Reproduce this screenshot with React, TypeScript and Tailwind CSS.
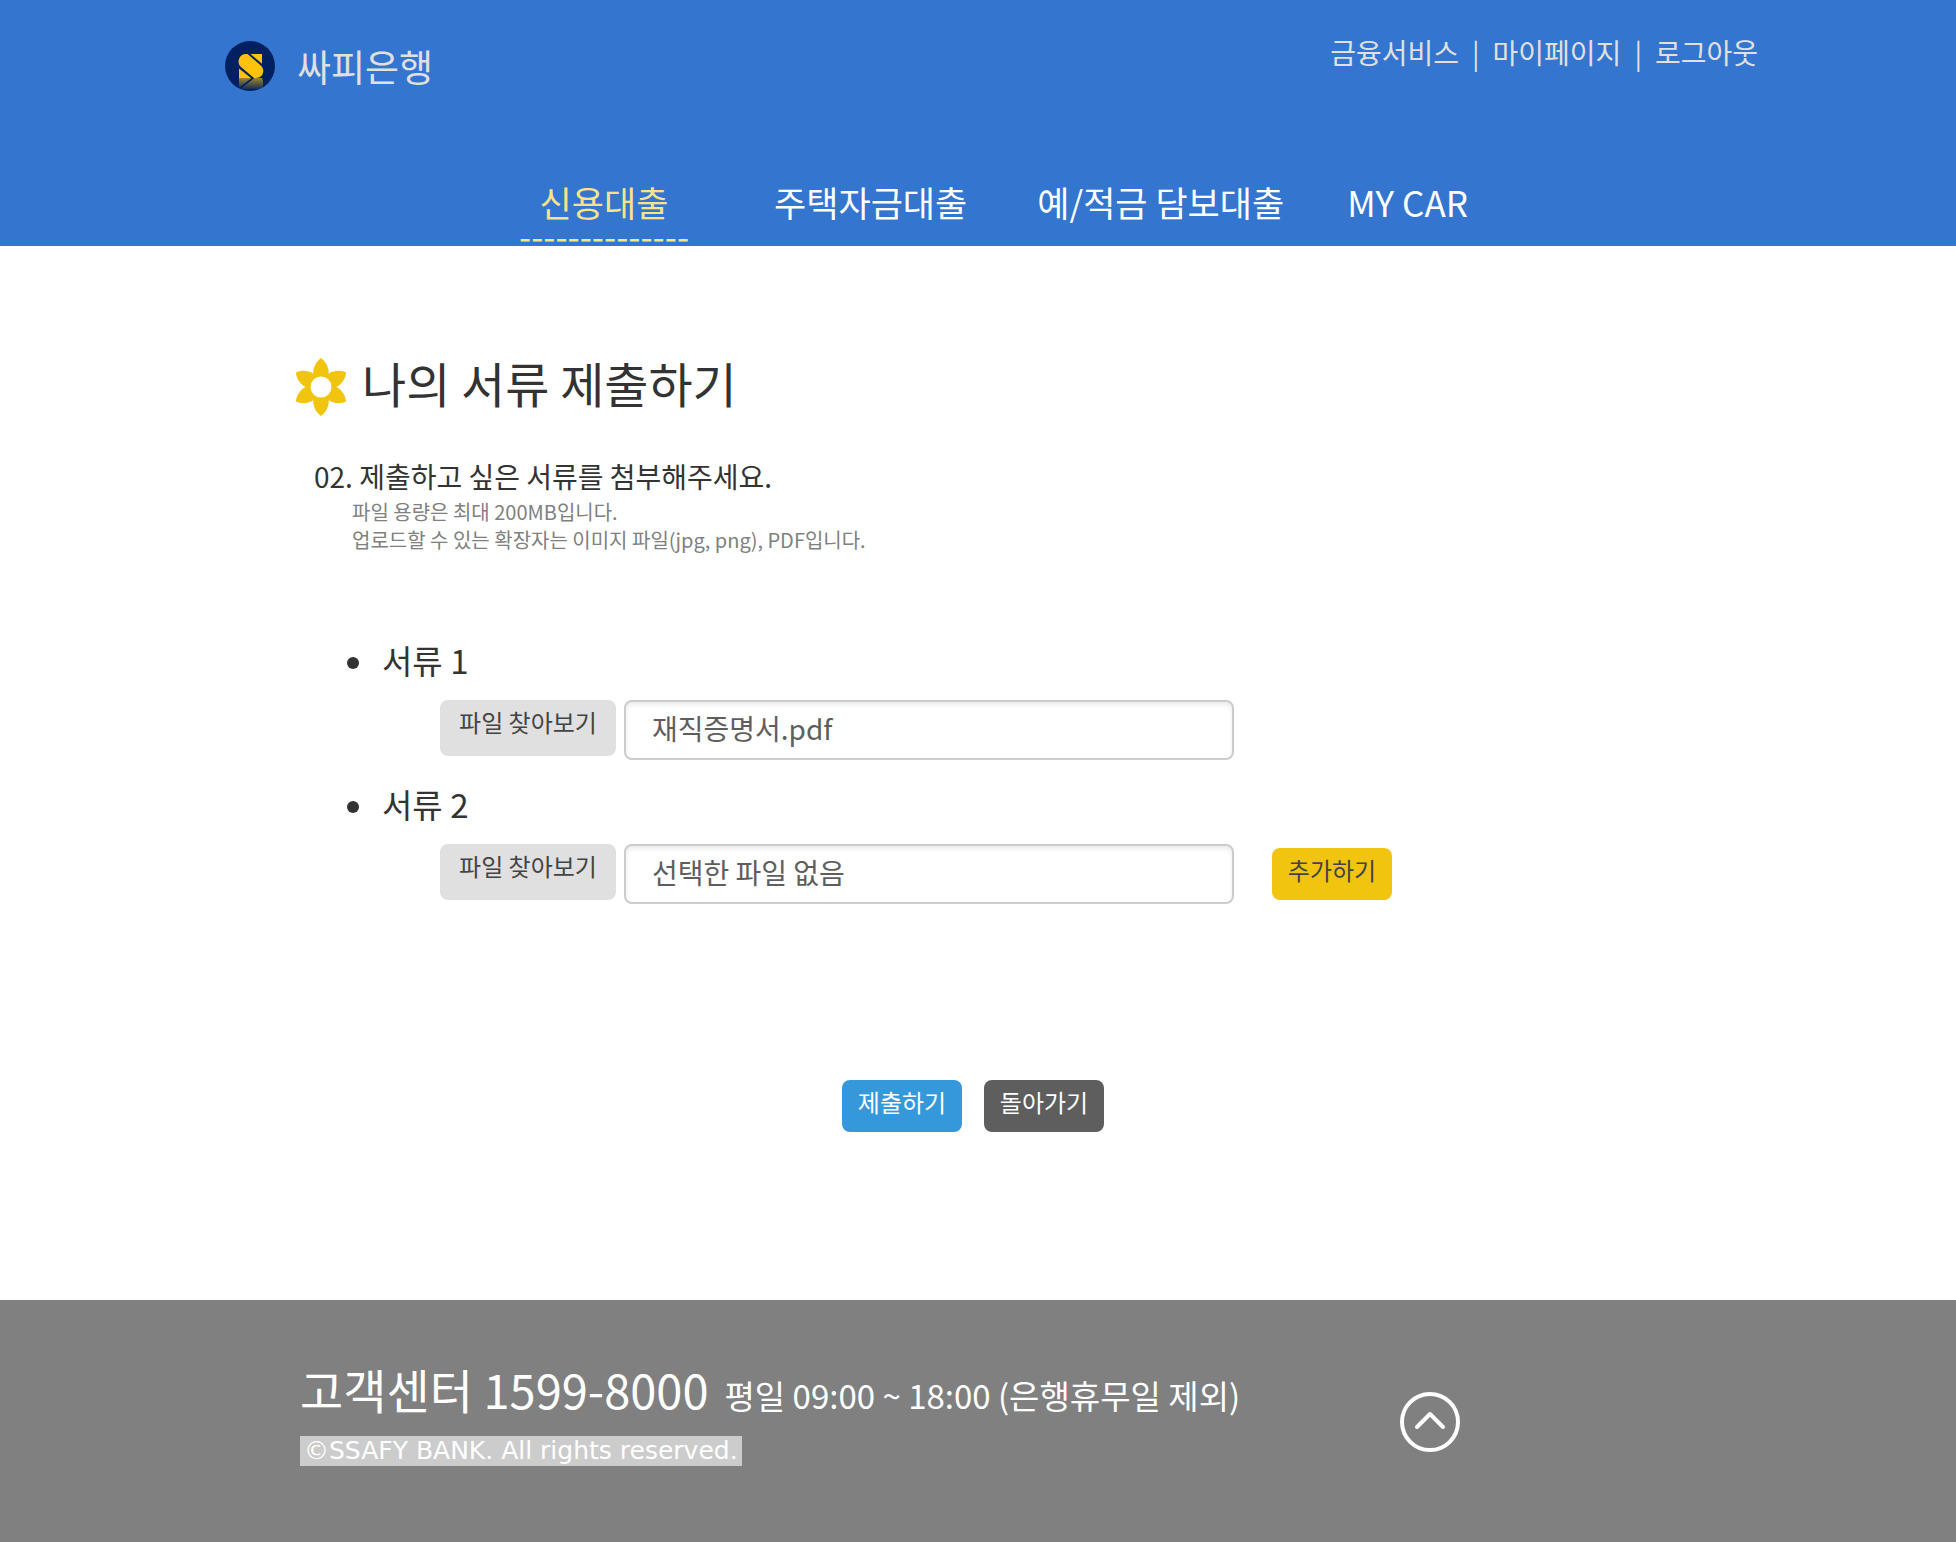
import { useState } from "react";

function BankLogo() {
  return (
    <svg viewBox="0 0 50 50" className="size-[50px]" aria-hidden="true">
      <defs>
        <linearGradient id="logo-fade" x1="0" y1="0" x2="0" y2="1">
          <stop offset="0" stopColor="#ffc20e" stopOpacity="0.62" />
          <stop offset="1" stopColor="#ffc20e" stopOpacity="0.08" />
        </linearGradient>
        <clipPath id="logo-disc">
          <circle cx="25" cy="25" r="25" />
        </clipPath>
      </defs>
      <circle cx="25" cy="25" r="25" fill="#00205f" />
      <path d="M25.5 13H37v9.8Z" fill="#ffc20e" />
      <path
        d="M21 13h1.5L35.500 24.200A7.300 7.300 0 0 1 34.500 36.300L31 37H29L16.200 26.200A7.500 7.500 0 0 1 21 13Z"
        fill="#ffc20e"
      />
      <path d="M14 27.400 26 37H14Z" fill="#ffc20e" />
      <g clipPath="url(#logo-disc)">
        <path d="M14 37h12.500L14 47Z" fill="url(#logo-fade)" />
        <path d="M29.500 37h7.500c1 2 1.300 4 1 7v4H15.500Z" fill="url(#logo-fade)" />
      </g>
    </svg>
  );
}

function Flower() {
  const petals = [0, 60, 120, 180, 240, 300];
  return (
    <svg viewBox="-25 -29 50 58" className="mt-0.5 h-[58px] w-[50px]" aria-hidden="true">
      {petals.map((angle) => (
        <path
          key={angle}
          d="M0 -29C5 -25.500 8.200 -19 7.700 -13.300V-7H-7.700V-13.300C-8.200 -19 -5 -25.500 0 -29Z"
          transform={`rotate(${angle})`}
          fill="#f1c40f"
        />
      ))}
      <circle r="10.500" fill="#fff" />
    </svg>
  );
}

function Header() {
  return (
    <header className="flex h-[246px] flex-col justify-between bg-[#3375cf]">
      <div className="flex items-start justify-between pt-[27px] pr-[198px] pl-[225px] text-[#e0e0e0]">
        <a href="#home" className="flex items-start gap-[22px] pt-[13px] text-[37px] leading-[52px]">
          <span className="pt-px">
            <BankLogo />
          </span>
          <span>싸피은행</span>
        </a>
        <nav aria-label="회원 메뉴" className="flex gap-[13px] text-[28px] leading-[50px]">
          <a href="#service">금융서비스</a>
          <span>|</span>
          <a href="#mypage">마이페이지</a>
          <span>|</span>
          <a href="#logout">로그아웃</a>
        </nav>
      </div>
      <nav aria-label="대출 메뉴" className="flex pb-[3px] pl-[519px] text-[35px] leading-[50px] text-white">
        <a href="#credit" className="mr-[85px] flex flex-col items-center text-[#f9e28b]">
          <span>신용대출</span>
          <span aria-hidden="true" className="leading-4">--------------</span>
        </a>
        <a href="#housing" className="mr-[70px]">주택자금대출</a>
        <a href="#deposit" className="mr-[63px]">예/적금 담보대출</a>
        <a href="#mycar">MY CAR</a>
      </nav>
    </header>
  );
}

const smallButton = "h-[52px] w-[120px] shrink-0 rounded-lg pb-2 text-2xl";

function DocumentRow({ index, initial, onAdd }: { index: number; initial: string; onAdd?: () => void }) {
  const id = `document-${index}`;
  return (
    <li className="h-36">
      <div className="flex h-[50px] items-start pl-[51px]">
        <span className="mt-[19px] mr-[23px] size-3 rounded-full bg-[#333]" />
        <label htmlFor={id} className="text-[33px] leading-[44px] text-[#333]">
          서류 {index}
        </label>
      </div>
      <div className="mt-3 flex items-start pl-36">
        <button type="button" className="h-14 w-[176px] shrink-0 rounded-lg bg-[#e0e0e0] pb-3 text-2xl text-[#444]">
          파일 찾아보기
        </button>
        <input
          id={id}
          type="text"
          readOnly
          value={initial}
          className="ml-2 h-[60px] w-[610px] rounded-lg border-2 border-[#ccc] px-[26px] pb-1 text-[28px] text-[#5e5e5e] shadow-[inset_0_3px_4px_rgba(0,0,0,0.08)] outline-none"
        />
        {onAdd && (
          <button type="button" onClick={onAdd} className={`${smallButton} mt-1 ml-[38px] bg-[#f1c40f] text-[#444]`}>
            추가하기
          </button>
        )}
      </div>
    </li>
  );
}

export default function App() {
  const [files, setFiles] = useState(["재직증명서.pdf", "선택한 파일 없음"]);
  return (
    <div className="flex min-h-screen flex-col bg-white font-['Noto_Sans_CJK_KR',sans-serif]">
      <Header />
      <main className="flex grow flex-col pt-[110px] pl-[296px]">
        <h1 className="flex items-start gap-4 text-5xl leading-[52px] text-[#333]">
          <Flower />
          나의 서류 제출하기
        </h1>
        <h2 className="mt-[38px] pl-[18px] text-[28px] leading-[44px] text-[#333]">
          02. 제출하고 싶은 서류를 첨부해주세요.
        </h2>
        <p className="pl-14 text-xl leading-7 text-[#808080]">
          파일 용량은 최대 200MB입니다.
          <br />
          업로드할 수 있는 확장자는 이미지 파일(jpg, png), PDF입니다.
        </p>
        <ul className="mt-[84px]">
          {files.map((name, i) => (
            <DocumentRow
              key={i}
              index={i + 1}
              initial={name}
              onAdd={i === files.length - 1 ? () => setFiles([...files, "선택한 파일 없음"]) : undefined}
            />
          ))}
        </ul>
        <div className="mt-[154px] mb-[168px] flex gap-[22px] pl-[546px] text-white">
          <button type="submit" className={`${smallButton} bg-[#3498db]`}>제출하기</button>
          <button type="button" className={`${smallButton} bg-[#5e5e5e]`}>돌아가기</button>
        </div>
      </main>
      <footer className="flex h-[242px] bg-[#808080] pt-14 pl-[300px] text-white">
        <div className="w-[1100px]">
          <p className="flex items-baseline gap-4">
            <span className="text-[47px] leading-[66px]">고객센터 1599-8000</span>
            <span className="text-[33px] leading-[66px]">평일 09:00 ~ 18:00 (은행휴무일 제외)</span>
          </p>
          <p className="mt-2 w-fit bg-[#ccc] px-1 font-['DejaVu_Sans',sans-serif] text-[25px] leading-[30px]">
            ©SSAFY BANK. All rights reserved.
          </p>
        </div>
        <button type="button" aria-label="맨 위로" onClick={() => window.scrollTo(0, 0)} className="mt-9 size-[60px]">
          <svg viewBox="0 0 60 60" fill="none" stroke="#fff" strokeWidth="4" strokeLinecap="round" strokeLinejoin="round">
            <circle cx="30" cy="30" r="28" />
            <path d="M17 35 30 22 43 35" />
          </svg>
        </button>
      </footer>
    </div>
  );
}
